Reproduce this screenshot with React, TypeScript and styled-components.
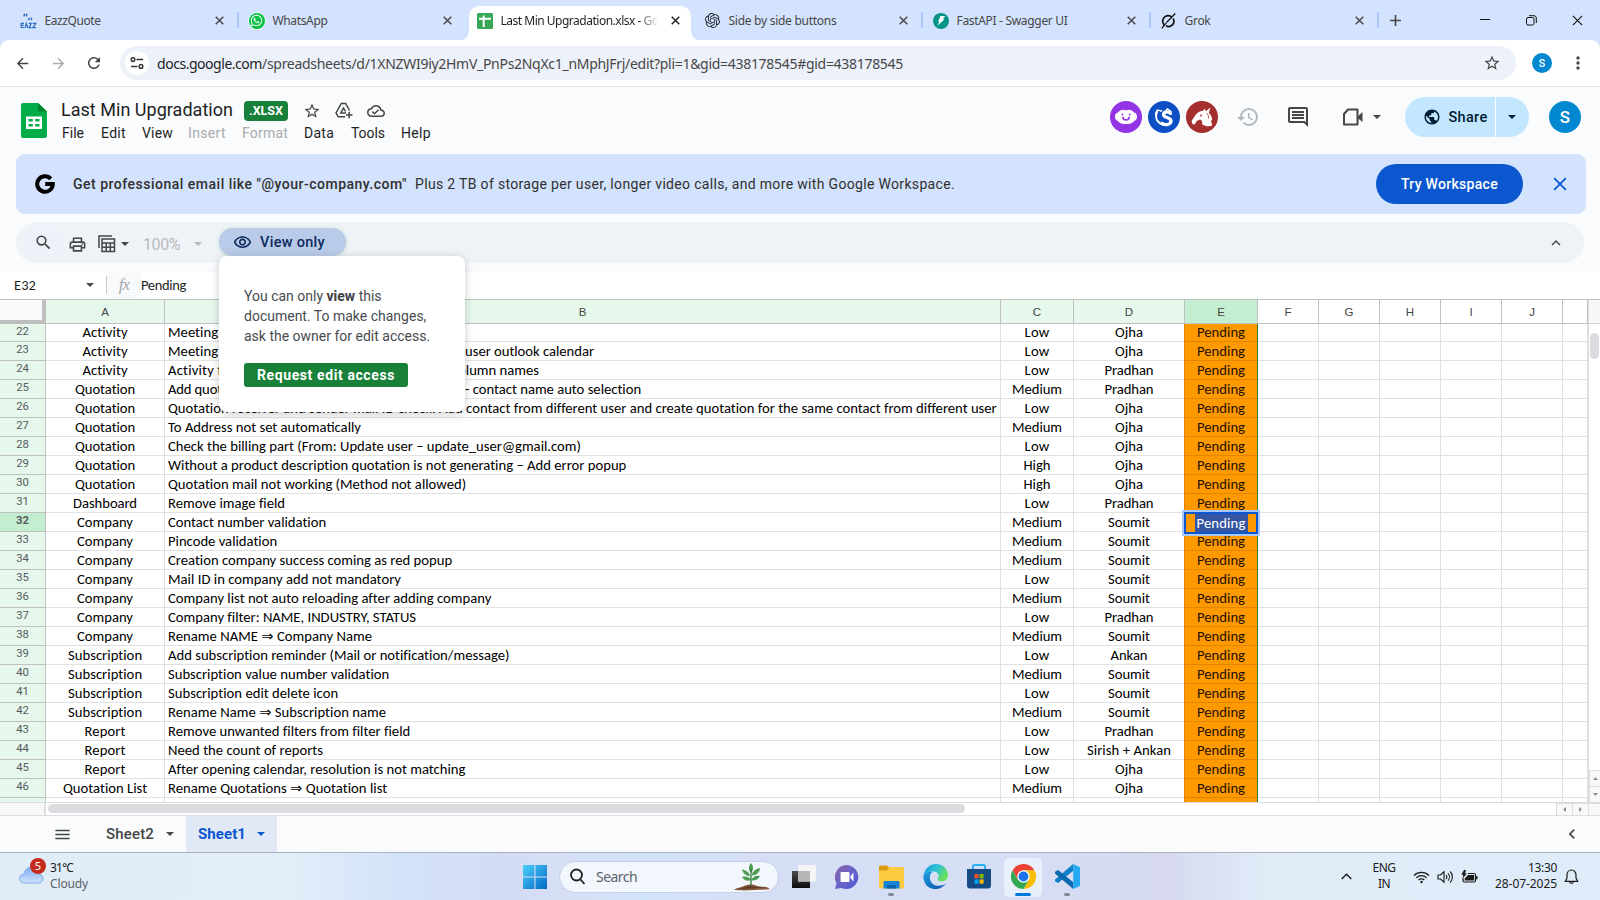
import React, { useLayoutEffect, useRef, useState } from "react";
import styled, { createGlobalStyle, css } from "styled-components";
import {
  MdArrowBack, MdArrowForward, MdRefresh, MdStarBorder, MdMoreVert, MdOutlineCloudDone,
  MdHistory, MdOutlineInsertComment, MdPublic, MdSearch, MdOutlinePrint, MdOutlineVisibility, MdExpandLess,
  MdChevronLeft, MdMenu,
} from "react-icons/md";
import { SiOpenai } from "react-icons/si";
import { FaWhatsapp } from "react-icons/fa";

const UI = `"Noto Sans", "Open Sans", sans-serif`;
const GOOGLE = `Roboto, "Liberation Sans", sans-serif`;
const CELL = `Carlito, Lato, "DejaVu Sans", sans-serif`;

const Global = createGlobalStyle`
  *, *::before, *::after { box-sizing: border-box; }
  body { margin: 0; overflow: hidden; background: #fff; }
  svg { display: block; flex: none; }
`;

/* Text run whose tracking is adjusted to fill a given width. */
const Run = styled.span<{ $w: number }>`
  display: inline-block;
  flex: none;
  width: ${(p) => p.$w}px;
  white-space: pre;
  text-align: left;
`;

function Fit({ w, children }: { w: number; children: string }) {
  const inner = useRef<HTMLSpanElement>(null);
  const [spacing, setSpacing] = useState(0);
  useLayoutEffect(() => {
    const el = inner.current;
    if (el) setSpacing((w - el.getBoundingClientRect().width) / Math.max(1, children.length));
  }, [w, children]);
  return (
    <Run $w={w}>
      <span ref={inner} style={{ letterSpacing: spacing }}>{children}</span>
    </Run>
  );
}

const Screen = styled.div`
  width: 1600px;
  height: 900px;
  overflow: hidden;
  display: flex;
  flex-direction: column;
  background: #f9fbfd;
  color: #1f1f1f;
  font-family: ${GOOGLE};
`;

/* Places one item in a fixed-width slot after a gap. */
const Slot = styled.div<{ $w: number; $ml?: number; $mt?: number; $c?: string }>`
  flex: none;
  display: flex;
  align-items: center;
  justify-content: center;
  width: ${(p) => p.$w}px;
  margin-left: ${(p) => p.$ml ?? 0}px;
  margin-top: ${(p) => p.$mt ?? 0}px;
  color: ${(p) => p.$c ?? "#444746"};
`;

const Caret = styled.i<{ $c?: string }>`
  width: 0;
  height: 0;
  border: 4px solid transparent;
  border-top-color: ${(p) => p.$c ?? "#444746"};
  border-bottom: 0;
`;

/* ---------- browser chrome ---------- */
const TabStrip = styled.div`
  flex: none;
  display: flex;
  height: 41px;
  padding-left: 10px;
  background: #d3e3fd;
  font: 12px ${UI};
`;
const Tab = styled.div<{ $active?: boolean; $sep?: boolean }>`
  position: relative;
  flex: none;
  display: flex;
  align-items: center;
  width: 228px;
  height: 41px;
  padding-left: 10px;
  color: ${(p) => (p.$active ? "#1f1f1f" : "#474747")};
  ${(p) => p.$sep && css`
    &::after { content: ""; position: absolute; right: -1px; top: 12px; width: 2px; height: 16px; background: #a8c7fa; }
  `}
  ${(p) => p.$active && css`
    &::before {
      content: ""; position: absolute; inset: 6px 3px 0 3px; background: #fff; border-radius: 10px 10px 0 0;
    }
  `}
  & > * { position: relative; }
`;
const Flare = styled.svg<{ $side: "left" | "right" }>`
  && { position: absolute; }
  bottom: 0;
  ${(p) => p.$side}: -7px;
`;
const TabIcon = styled.div`
  flex: none; width: 17px; height: 17px; margin-right: 7px; display: flex; align-items: center; justify-content: center;
`;
const TabTitle = styled.div<{ $fade?: boolean }>`
  flex: none; width: 159px; padding-left: 0.5px; white-space: nowrap;
  ${(p) => p.$fade && css`mask-image: linear-gradient(90deg, #000 138px, transparent 159px);`}
`;
const WindowButtons = styled.div`
  display: flex; align-items: center; height: 40px;
`;
const Backing = styled.div`flex: none; height: 46px; background: #d3e3fd;`;
const AddressRow = styled.div`
  display: flex;
  align-items: center;
  height: 46px;
  margin-top: -1px;
  background: #fff;
  border-radius: 9px 9px 0 0;
  box-shadow: 0 1px 0 #dfe3df;
`;
const Omnibox = styled.div`
  display: flex; align-items: center; width: 1396px; height: 34px; margin-left: 16px; padding-left: 5px;
  border-radius: 17px; background: #edf1fa; font: 14px ${UI}; color: #474747;
`;
const SiteInfo = styled.div`
  width: 24px; height: 24px; border-radius: 50%; background: #fff; display: grid; place-items: center; margin-right: 8px;
`;
const Host = styled.span`color: #1f1f1f;`;
const Avatar = styled.div<{ $s: number; $ml?: number; $bg?: string }>`
  flex: none; width: ${(p) => p.$s}px; height: ${(p) => p.$s}px; margin-left: ${(p) => p.$ml ?? 0}px;
  border-radius: 50%; background: ${(p) => p.$bg ?? "#0288d1"}; color: #fff; display: grid; place-items: center;
  font: 500 ${(p) => p.$s * 0.53}px ${GOOGLE};
`;

/* ---------- document header ---------- */
const DocHeader = styled.header`
  flex: none; display: flex; height: 67px; align-items: flex-start; padding: 0 20px;
`;
const DocTitles = styled.div`
  width: 400px; padding-top: 10px; margin-left: 14px;
`;
const TitleLine = styled.div`
  display: flex; align-items: center; height: 25px; font-size: 18px; line-height: 25px; color: #1f1f1f;
`;
const FileBadge = styled.span`
  display: flex; align-items: center; justify-content: center; width: 44px; height: 20px; margin: 2px 0 0 11px;
  border-radius: 4px; background: #188038; color: #fff; font: 700 12.5px ${GOOGLE};
`;
const MenuLine = styled.nav`
  display: flex; height: 21px; align-items: center; font-size: 14px; padding-left: 1px;
`;
const MenuItem = styled.span<{ $mr: number; $off?: boolean }>`
  margin-right: ${(p) => p.$mr}px; color: ${(p) => (p.$off ? "#a9abad" : "#1f1f1f")};
`;
const HeaderTools = styled.div`
  display: flex; align-items: center; height: 40px; margin: 10px 0 0 auto; width: 470px; flex: none;
`;
const ShareButton = styled.div`
  display: flex; flex: none; align-items: center; width: 124px; height: 40px; margin-left: 22px; border-radius: 20px;
  background: linear-gradient(90deg, #c2e7ff 90px, #fff 90px, #fff 91px, #c2e7ff 91px); color: #001d35;
  font-size: 14.5px; font-weight: 500;
`;
const Promo = styled.section`
  flex: none; display: flex; align-items: center; width: 1570px; height: 60px; margin-left: 16px;
  border-radius: 9px; background: #d3e3fd; font-size: 14px; color: #1f1f1f;
`;
const PromoText = styled.span<{ $bold?: boolean; $ml: number }>`
  margin-left: ${(p) => p.$ml}px; font-weight: ${(p) => (p.$bold ? 500 : 400)}; color: #303030;
`;
const PromoButton = styled.button`
  width: 147px; height: 40px; margin-left: auto; border: 0; padding: 0; border-radius: 20px; background: #0b57d0; color: #fff;
  font: 500 14px ${GOOGLE};
`;

/* ---------- toolbar and popup ---------- */
const Toolbar = styled.div`
  position: relative; flex: none; display: flex; align-items: center; width: 1568px; height: 41px; margin: 8px 0 0 16px;
  border-radius: 21px; background: #eff3f8;
`;
const SearchTile = styled.div`
  display: grid; place-items: center; width: 36px; height: 28px; margin-left: 9px; background: #edf1f9; color: #444746;
`;
const ViewOnly = styled.div`
  display: flex; align-items: center; width: 127px; height: 28px; margin: -1px 0 0 15px; padding-left: 14px;
  border-radius: 14px; background: #b9cbe8; color: #0c2a5c; font-size: 14.5px; font-weight: 500;
  box-shadow: 0 1px 4px #b9dccb;
`;
const AccessPopup = styled.div`
  position: absolute; z-index: 5; left: 203px; top: 34px; width: 246px; height: 156px; padding: 30px 25px 0; background: #fff;
  border-radius: 8px; box-shadow: 0 2px 8px rgba(60, 64, 67, 0.28); color: #474b50; font: 14px/20px ${GOOGLE};
`;
const PopupLine = styled.div`white-space: nowrap; height: 20px; b { color: #3c4043; }`;
const RequestButton = styled.button`
  display: block; width: 164px; height: 24px; margin-top: 17px; padding: 0; border: 0; border-radius: 3px; background: #188038;
  color: #fff; font: 700 14px ${GOOGLE};
`;

/* ---------- formula bar and grid ---------- */
const FormulaBar = styled.div`
  flex: none; display: flex; align-items: center; height: 28px; margin-top: 8px; background: #fff; color: #1f1f1f;
  font: 14.5px ${CELL}; border-top: 1px solid #f5f7fa; padding-bottom: 2px;
`;
const FxTile = styled.div`
  display: grid; place-items: center; width: 34px; height: 26px; background: #f8f9fa; color: #a4a7a9;
  font: italic 17px "Liberation Serif", serif; letter-spacing: -1px;
`;
const Divider = styled.i`width: 1px; height: 18px; margin-left: 10px; background: #c7c7c7;`;

const COLS = "46px 119px 836px 73px 111px 73px 61px 61px 61px 61px 61px 25px";
const GridArea = styled.div`
  flex: none; display: flex; height: 503px; background: #fff; border-top: 1px solid #c0c0c0;
`;
const Sheet = styled.div`width: 1588px; height: 502px; overflow: hidden; flex: none;`;
const HeadRow = styled.div`
  display: grid; grid-template-columns: ${COLS}; height: 24px;
`;
const Corner = styled.div`
  background: #f8f9fa; border-right: 4px solid #c0c0c0; border-bottom: 4px solid #bdbdbd;
`;
const Head = styled.div<{ $tone?: string }>`
  display: grid; place-items: center; background: ${(p) => p.$tone ?? "#fff"}; color: #444746;
  border-right: 1px solid #c0c0c0; border-bottom: 1px solid #c0c0c0; font: 11.5px/22px "Liberation Sans", sans-serif;
`;
const Row = styled.div<{ $first?: boolean }>`
  display: grid; grid-template-columns: ${COLS}; height: ${(p) => (p.$first ? 18 : 19)}px;
`;
const RowHead = styled.div<{ $on?: boolean }>`
  display: flex; justify-content: center; padding-top: 1px; background: ${(p) => (p.$on ? "#c4eed0" : "#e6f8ec")};
  border-right: 1px solid #c0c0c0; border-bottom: 1px solid #c0c0c0; color: #575b5f;
  font: ${(p) => (p.$on ? 700 : 400)} 11.3px/13px Roboto, sans-serif;
`;
const Cell = styled.div<{ $left?: boolean; $pending?: boolean }>`
  position: relative; display: flex; align-items: flex-end; justify-content: ${(p) => (p.$left ? "flex-start" : "center")};
  padding-left: ${(p) => (p.$left ? 3 : 0)}px; min-width: 0;
  background: ${(p) => (p.$pending ? "#ff9900" : "#fff")}; color: ${(p) => (p.$pending ? "#1c1000" : "#000")};
  border-right: 1px solid ${(p) => (p.$pending ? "#2c7a3d" : "#e1e1e1")};
  border-bottom: 1px solid ${(p) => (p.$pending ? "#e08600" : "#e1e1e1")};
  font: 14.67px/17px ${CELL}; white-space: pre;
  ${(p) => p.$pending && css`box-shadow: -1px 0 0 #e08600;`}
`;
const Gap = styled.i<{ $w: number }>`flex: none; width: ${(p) => p.$w}px;`;
const Selection = styled.div`
  position: absolute; z-index: 2; left: -1px; top: -1px; width: 74px; height: 22px; border: 2px solid #0b57d0; background: #ff9900;
  box-shadow: 0 0 0 2px #a8c7fa; display: flex; justify-content: center;
`;
const Selected = styled.span`
  display: flex; justify-content: center; width: 53px; height: 18px; background: #3455a1; color: #fff; line-height: 19px;
`;
const VScroll = styled.div`
  display: flex; flex-direction: column; width: 12px; height: 502px; background: #fff; border-left: 1px solid #dcdcdc;
`;
const VHead = styled.div`height: 24px; background: #f8f8f8; border-bottom: 1px solid #d5d5d5;`;
const VThumb = styled.div`width: 9px; height: 26px; margin: 9px 0 auto 1px; border-radius: 5px; background: #dadce0;`;
const ScrollButton = styled.div<{ $w: number; $h: number }>`
  display: grid; place-items: center; width: ${(p) => p.$w}px; height: ${(p) => p.$h}px; background: #f8f8f8;
  border-top: 1px solid #dcdcdc; border-left: 1px solid #dcdcdc; color: #8a8d90;
`;
const HScroll = styled.div`
  flex: none; display: flex; height: 13px; background: #fff; border-top: 1px solid #dadcdc;
`;
const HCorner = styled.div`width: 46px; background: #f8f8f8; border-right: 2px solid #e0e0e0;`;
const HThumb = styled.div`width: 917px; height: 9px; margin: 1px auto 0 2px; border-radius: 5px; background: #dadce0;`;

/* ---------- sheet tabs ---------- */
const SheetBar = styled.div`
  flex: none; display: flex; align-items: center; height: 38px; background: #f9fbfd; border-top: 1px solid #dcdfe2;
  border-bottom: 1px solid #a9b2c0; font-size: 15px; font-weight: 500; color: #444746;
`;
const ActiveSheet = styled.div`
  display: flex; align-items: center; width: 91px; height: 36px; margin-left: 10px; padding-left: 12px;
  background: #e1e9f7; color: #0b57d0; font-weight: 700;
`;

/* ---------- taskbar ---------- */
const Taskbar = styled.footer`
  flex: none; display: flex; align-items: center; height: 47px; font: 12px/16px ${UI}; color: #202020;
  background: linear-gradient(90deg, #e0edf6 0, #e1edf8 290px, #d3e3f9 400px, #d4dcf5 500px, #d6dff5 570px, #d2e4fa 640px,
    #d6def5 760px, #d6def5 1000px, #d7daef 1170px, #e1ecf8 1270px, #deebf8 1600px);
`;
const Weather = styled.div`display: flex; width: 523px; align-items: center;`;
const WeatherIcon = styled.div`position: relative; width: 33px; height: 30px; margin-left: 17px;`;
const CloudHolder = styled.div`position: absolute; left: 2px; top: 4px;`;
const Badge = styled.span`
  position: absolute; left: 13px; top: -4px; width: 16px; height: 16px; border-radius: 50%; background: #c42b1c; color: #fff;
  font: 11px/16px ${UI}; text-align: center;
`;
const WeatherText = styled.div<{ $soft?: boolean }>`
  position: relative; top: -1px; color: ${(p) => (p.$soft ? "#5b6068" : "#202020")};
`;
const SearchBox = styled.div`
  display: flex; align-items: center; width: 220px; height: 32px; margin-left: 12px; padding-left: 10px; border-radius: 16px;
  background: #f2f6fd; border: 1px solid #c5d0e6; color: #5f6368; font-size: 14px;
`;
const TaskApp = styled.div<{ $ml: number; $open?: boolean; $tile?: boolean }>`
  position: relative; flex: none; display: grid; place-items: center; width: 24px; height: 40px; margin-left: ${(p) => p.$ml}px;
  svg { position: relative; }
  ${(p) => p.$tile && css`
    &::before { content: ""; position: absolute; inset: 1px -7px 0; border-radius: 5px; background: #eaf0fb; }
  `}
  ${(p) => p.$open && css`
    &::after { content: ""; position: absolute; bottom: 1px; left: ${p.$tile ? 4 : 9}px; width: ${p.$tile ? 16 : 6}px; height: 3px;
      border-radius: 2px; background: ${p.$tile ? "#0078d4" : "#858b96"}; }
  `}
`;
const TrayText = styled.div<{ $w: number; $ml: number; $right?: boolean }>`
  flex: none; display: flex; flex-direction: column; align-items: ${(p) => (p.$right ? "flex-end" : "center")};
  width: ${(p) => p.$w}px; margin-left: ${(p) => p.$ml}px; margin-top: -1px;
`;

/* ---------- data ---------- */
const W: Record<string, number> = {
  Activity: 45, Quotation: 60, Dashboard: 64, Company: 56, Subscription: 74, Report: 41, "Quotation List": 84,
  Low: 25, Medium: 50, High: 27, Ojha: 28, Pradhan: 49, Soumit: 42, Ankan: 37, "Sirish + Ankan": 84, Pending: 48,
};
type Seg = string | number;
/* [number, module, description as text, width and gap sequence, priority, owner] */
const ROWS: [number, string, Seg[], string, string][] = [
  [22, "Activity", ["Meeting", 50], "Low", "Ojha"],
  [23, "Activity", ["Meeting", 50, 247, "user outlook calendar", 129], "Low", "Ojha"],
  [24, "Activity", ["Activity f", 54, 230, "column names", 87], "Low", "Pradhan"],
  [25, "Quotation", ["Add quot", 54, 243, "- contact name auto selection", 176], "Medium", "Pradhan"],
  [26, "Quotation", ["Quotation receiver and sender mail ID check. Add contact from different user and create quotation for the same contact from different user", 828], "Low", "Ojha"],
  [27, "Quotation", ["To Address not set automatically", 193], "Medium", "Ojha"],
  [28, "Quotation", ["Check the billing part (From: Update user – update_user@gmail.com)", 413], "Low", "Ojha"],
  [29, "Quotation", ["Without a product description quotation is not generating – Add error popup", 458], "High", "Ojha"],
  [30, "Quotation", ["Quotation mail not working (Method not allowed)", 298], "High", "Ojha"],
  [31, "Dashboard", ["Remove image field", 117], "Low", "Pradhan"],
  [32, "Company", ["Contact number validation", 158], "Medium", "Soumit"],
  [33, "Company", ["Pincode validation", 109], "Medium", "Soumit"],
  [34, "Company", ["Creation company success coming as red popup", 284], "Medium", "Soumit"],
  [35, "Company", ["Mail ID in company add not mandatory", 233], "Low", "Soumit"],
  [36, "Company", ["Company list not auto reloading after adding company", 323], "Medium", "Soumit"],
  [37, "Company", ["Company filter: NAME, INDUSTRY, STATUS", 248], "Low", "Pradhan"],
  [38, "Company", ["Rename NAME ⇒ Company Name", 204], "Medium", "Soumit"],
  [39, "Subscription", ["Add subscription reminder (Mail or notification/message)", 341], "Low", "Ankan"],
  [40, "Subscription", ["Subscription value number validation", 221], "Medium", "Soumit"],
  [41, "Subscription", ["Subscription edit delete icon", 170], "Low", "Soumit"],
  [42, "Subscription", ["Rename Name ⇒ Subscription name", 218], "Medium", "Soumit"],
  [43, "Report", ["Remove unwanted filters from filter field", 242], "Low", "Pradhan"],
  [44, "Report", ["Need the count of reports", 155], "Low", "Sirish + Ankan"],
  [45, "Report", ["After opening calendar, resolution is not matching", 297], "Low", "Ojha"],
  [46, "Quotation List", ["Rename Quotations ⇒ Quotation list", 219], "Medium", "Ojha"],
];

function Description({ segs }: { segs: Seg[] }) {
  const out: React.ReactNode[] = [];
  for (let i = 0; i < segs.length; i++) {
    const s = segs[i];
    if (typeof s === "string") {
      out.push(<Fit key={i} w={segs[i + 1] as number}>{s}</Fit>);
      i++;
    } else out.push(<Gap key={i} $w={s} />);
  }
  return <>{out}</>;
}

/* ---------- drawings ---------- */
const Cross = ({ s = 9, w = 1.6, c = "#474747" }) => (
  <svg width={s} height={s} viewBox="0 0 10 10" stroke={c} strokeWidth={w} fill="none"><path d="M.8.8l8.4 8.4M9.2.8L.8 9.2" /></svg>
);
const EazzLogo = () => (
  <svg width="17" height="16" viewBox="0 0 17 16" fill="none" stroke="#2f6cc4" strokeWidth="1.2">
    <path d="M5 1C4 1.500 4 2.500 4.500 3.200M7.300 1C6.300 1.500 6.300 2.500 6.800 3.200M8.500 5c.8.5.6 1.500 0 2M11 5c.8.5.6 1.500 0 2" strokeWidth="1.600" />
    <path d="M4 10.300H1.200v4.200H4M1.200 12.400H3.800M5 15l1.300-4.500L7.800 15M8.800 10.400h2.500l-2.200 4.200h2.500M12.600 10.400h3.200l-3 4.200h3.200" />
  </svg>
);
const WaDisc = styled.div`
  width: 16px; height: 16px; display: grid; place-items: center; border-radius: 50%; background: #09c143; color: #fff;
  box-shadow: 0 0 0 1px #e9f3f6;
`;
const WhatsAppIcon = () => (
  <WaDisc><FaWhatsapp size={13} /></WaDisc>
);
const SheetsFavicon = () => (
  <svg width="16" height="16" viewBox="0 0 16 16"><rect width="16" height="16" rx="1.500" fill="#34a853" /><path d="M2 5.800h12M6.700 2.500V14" stroke="#fff" strokeWidth="2" /></svg>
);
const FastApi = () => (
  <svg width="16" height="16" viewBox="0 0 16 16"><circle cx="8" cy="8" r="8" fill="#049486" /><path d="M7.500 3H12.200L9.900 6.200H11.500L4.300 13L6.300 8.700H5z" fill="#fff" /></svg>
);
const Grok = () => (
  <svg width="15" height="16" viewBox="0 0 15 16" fill="none" stroke="#111" strokeWidth="1.700"><path d="M3.600 12.300A5.200 5.200 0 0 1 10.800 4M12 5.500a5.200 5.200 0 0 1-7 7.300" /><path d="M.8 15.300L5.300 9.800M5.500 9.500L14.300.5" strokeWidth="1.300" /></svg>
);
const Tune = () => (
  <svg width="14" height="14" viewBox="0 0 14 14" fill="none" stroke="#333" strokeWidth="1.500"><circle cx="3" cy="3.600" r="1.800" /><circle cx="11" cy="10.400" r="1.800" /><path d="M6.500 3.600H13M1 10.400h6.500" /></svg>
);
const SheetsLogo = () => (
  <svg width="26" height="35" viewBox="0 0 26 35"><path d="M2 0h15l9 8.500V33a2 2 0 0 1-2 2H2a2 2 0 0 1-2-2V2a2 2 0 0 1 2-2z" fill="#00ac47" /><path d="M17 0l9 8.500h-9z" fill="#00832d" /><path d="M5 13.500h16v12.500H5zm2.500 2.400v2.600h4.300v-2.600zm6.700 0v2.600h4.300v-2.600zM7.500 21v2.600h4.300V21zm6.700 0v2.600h4.300V21z" fill="#fff" fillRule="evenodd" /></svg>
);
const DriveAdd = () => (
  <svg width="18" height="17" viewBox="0 0 18 17" fill="none" stroke="#444746" strokeWidth="1.500"><path d="M10 14.800H3.300L1 11 6.300 1.500h4.400L14.500 8.500" /><path d="M11 11H5.800L8.500 6l2 3.500" /><path d="M14.200 9.800v6.400M11 13h6.400" /></svg>
);
const Brain = () => (
  <svg width="24" height="16" viewBox="0 0 24 16"><path d="M4 3.500C6 .5 9.500 0 12 1.500 14.500 0 18 .5 20 3.500c4 1 4 7.500 0 8.500-1 2.500-5 3-8 3s-7-.5-8-3C0 11 0 4.500 4 3.500z" fill="#fff" /><path d="M8.800 7.800a3.200 3.200 0 0 0 6.400 0" stroke="#9334e6" strokeWidth="1.600" fill="none" /><circle cx="8.300" cy="5.500" r=".9" fill="#9334e6" /><circle cx="15.700" cy="5.500" r=".9" fill="#9334e6" /></svg>
);
const Dragon = () => (
  <svg width="32" height="32" viewBox="0 0 32 32" fill="none" stroke="#fff" strokeLinecap="round"><path d="M22.500 12.500C19 9.800 15.500 11 15.500 13.800c0 3.200 7.500 2.200 7.500 6 0 3.700-5 4.700-9 2.700" strokeWidth="3.300" /><path d="M9 11C6.500 17 9.500 22.500 15.500 23.800" strokeWidth="2" /><path d="M7.500 12.800L9.300 9l4.200 1M18 9.500l1.500-1.500 3.500 2.500" strokeWidth="1.500" /></svg>
);
const Unicorn = () => (
  <svg width="32" height="32" viewBox="0 0 32 32" fill="#fff"><path d="M5.800 19.500L10.500 12.800C12.500 10.800 15 10 17 9.800l1.800-2 1.200 2.400 4.500-4-1.700 5.700c2.300 2 3.500 4.600 3.200 7l-1 .8 1.300 4.900c-3.600 1.200-7.300.6-10.300-1.400.7-2.300 0-4-1.900-4.600l-3.400 1.500-2 3.300C7 24 5.300 22 5.800 19.500z" /><circle cx="15" cy="14.500" r=".9" fill="#a52e2e" /><path d="M20.500 12c1.500 1.500 2.300 3.300 2.200 5.500" fill="none" stroke="#a52e2e" strokeWidth=".8" /></svg>
);
const Meet = () => (
  <svg width="22" height="20" viewBox="0 0 22 20" fill="none" stroke="#444746" strokeWidth="2"><path d="M6 2.500h9.500v15H2V7z" strokeLinejoin="round" /><path d="M15.500 9.800L20.500 5v10l-5-4z" fill="#444746" stroke="none" /></svg>
);
const GLogo = () => (
  <svg width="20" height="20" viewBox="0 0 20 20" fill="none" stroke="#000" strokeWidth="4"><path d="M15.800 4.800A7.800 7.800 0 1 0 17.800 10H10.200" /></svg>
);
const FilterViews = () => (
  <svg width="18" height="18" viewBox="0 0 18 18" fill="none" stroke="#444746" strokeWidth="1.500"><path d="M1 13V1h13M4 4h12.500v12.500H4zM4 8h12.500M4 12.200h12.500M8.200 8v8.500M12.300 8v8.500" /></svg>
);
const Arrow = ({ d }: { d: string }) => <svg width="7" height="7" viewBox="0 0 7 7" fill="#8a8d90"><path d={d} /></svg>;
const Cloud = () => (
  <svg width="25" height="18" viewBox="0 0 25 18"><defs><linearGradient id="cl" x2="0" y2="1"><stop stopColor="#7fb0f3" /><stop offset="1" stopColor="#cfe0fb" /></linearGradient></defs><path d="M5 17a4.500 4.500 0 0 1 0-9C6 3 9 1 12.500 1s6.500 2.500 7 7a4.500 4.500 0 0 1 0 9z" fill="url(#cl)" stroke="#6f9fe8" strokeWidth=".8" /></svg>
);
const WindowsLogo = () => (
  <svg width="24" height="24" viewBox="0 0 24 24"><defs><linearGradient id="wn" x2="1" y2="1"><stop stopColor="#4fd0fa" /><stop offset="1" stopColor="#0067c8" /></linearGradient></defs><path d="M0 0h11.400v11.400H0zM12.500 0H24v11.400H12.500zM0 12.500h11.400V24H0zM12.500 12.500H24V24H12.500z" fill="url(#wn)" /></svg>
);
const Plant = () => (
  <svg width="36" height="28" viewBox="0 0 36 28"><path d="M0 27c3-3 7-2 10-4 4-2 10-2 13 0 4 1 9 0 13 3-9 1-24 2-36 1z" fill="#8a5a3c" /><path d="M3 26c6-2 8-1 12-3l8 1 10 1z" fill="#5d3926" /><g fill="#4f9d52"><path d="M17 0c3 3.500 2.500 7.500 0 9.500C14.500 7.500 14 3.500 17 0zM8 6.500c4 .5 7 2.500 8 6.500-4 0-7-2.500-8-6.500zM26 5c0 4-3 7-8 7.500 0-4 3.500-6.500 8-7.500zM8 14c3.500-1 7-.5 9 3-3.500 1.500-7 .5-9-3zM26 13c-1.500 3.500-5 5-9 4.500 1.500-3.500 5-5.500 9-4.500z" /></g><path d="M17 6v17" stroke="#2f7a3a" strokeWidth="1.300" /></svg>
);
const TaskView = () => (
  <svg width="25" height="25" viewBox="0 0 25 25"><defs><linearGradient id="tv" y2="1" x2="0"><stop stopColor="#4a4a4a" /><stop offset="1" stopColor="#0c0c0c" /></linearGradient></defs><path d="M1 7h18v17H1z" fill="url(#tv)" /><path d="M7 1h18v16.500H7z" fill="#f4f4f4" /><path d="M7 7h12v10.500H7z" fill="#b5b5b5" /></svg>
);
const Chat = () => (
  <svg width="24" height="24" viewBox="0 0 24 24"><defs><linearGradient id="ch" x2="1" y2="1"><stop stopColor="#8b68a8" /><stop offset=".5" stopColor="#6a62c8" /><stop offset="1" stopColor="#4a5bd2" /></linearGradient></defs><path d="M12 0a12 12 0 1 1-5.500 23L0 24l1.500-6A12 12 0 0 1 12 0z" fill="url(#ch)" /><rect x="5.500" y="7" width="9" height="10" rx="1" fill="#fff" /><path d="M15.500 11l3-3.500v9l-3-3.500z" fill="#fff" /></svg>
);
const Folder = () => (
  <svg width="25" height="24" viewBox="0 0 25 24"><path d="M0 2.500C0 1 .5.500 2 .500h6L11 3v5H0z" fill="#d99a10" /><path d="M10 2h13.500c1 0 1.500.5 1.500 1.500V22c0 1-.5 1.500-1.500 1.500h-22C.5 23.500 0 23 0 22V5.500h8z" fill="#fdcb3f" /><path d="M4.500 23.500v-6c0-1 .5-1.500 1.500-1.500h13c1 0 1.500.5 1.500 1.500v6z" fill="#1583d8" /><path d="M8 20h9v3.500H8z" fill="#0b62ad" /></svg>
);
const Edge = () => (
  <svg width="25" height="25" viewBox="0 0 24 24"><defs><linearGradient id="e1" x2="1" y2=".5"><stop stopColor="#1592dc" /><stop offset=".55" stopColor="#30c4d4" /><stop offset="1" stopColor="#6be15a" /></linearGradient><linearGradient id="e2" x2="1" y2="1"><stop stopColor="#1ba0e0" /><stop offset="1" stopColor="#0b4fa8" /></linearGradient></defs><path d="M.5 11C1.500 4.500 6.500 0 12.500 0 19.500 0 24 5 24 10.500c0 4-3 6.200-6 6.200-3.200 0-4.600-1.400-3.700-2.700 1.700-2.600.2-6.700-4-6.700C6 7.300 2 8.500.5 11z" fill="url(#e1)" /><path d="M.5 11c1.800-3.400 5.500-4.200 8.500-3.300C5.500 10 5.500 17 10.500 19.800c4 2 8.500 1 11.500-.8C16 26.500 5 25.500 1.500 17.500.4 15 .1 13 .5 11z" fill="url(#e2)" /></svg>
);
const Store = () => (
  <svg width="24" height="25" viewBox="0 0 24 25"><path d="M6 6V2.500C6 1.500 6.500 1 7.500 1h9c1 0 1.500.5 1.500 1.500V6" fill="none" stroke="#26b3f0" strokeWidth="2" /><path d="M0 5h24v16.500a3 3 0 0 1-3 3H3a3 3 0 0 1-3-3z" fill="#154a83" /><path d="M7.500 10H11.500v4.300h-4z" fill="#f25022" /><path d="M12.600 10h4v4.300h-4z" fill="#7fba00" /><path d="M7.500 15.400h4v4.300h-4z" fill="#00a4ef" /><path d="M12.600 15.400h4v4.300h-4z" fill="#ffb900" /></svg>
);
const Chrome = () => (
  <svg width="25" height="25" viewBox="0 0 48 48"><path d="M44.800 12A24 24 0 0 1 24 48l10.400-18L24 12z" fill="#fbbc04" /><path d="M24 48A24 24 0 0 1 3.200 12l10.400 18L34.400 30z" fill="#34a853" /><path d="M3.200 12A24 24 0 0 1 44.800 12H24L13.600 30z" fill="#ea4335" /><circle cx="24" cy="24" r="12" fill="#fff" /><circle cx="24" cy="24" r="9.500" fill="#1a73e8" /></svg>
);
const VsCode = () => (
  <svg width="25" height="25" viewBox="0 0 24 24"><path d="M17.500 0v6.500L3 18.200 0 16.500v-1.700z" fill="#0f7fc9" /><path d="M3 5.800L0 7.500v1.700L17.500 24v-6.500z" fill="#0a69b0" /><path d="M17.500 0L24 3v18l-6.500 3z" fill="#27a9f2" /></svg>
);
const Wifi = () => (
  <svg width="17" height="14" viewBox="0 0 17 14" fill="none" stroke="#1a1a1a" strokeWidth="1.200"><path d="M1 5.500a10.500 10.500 0 0 1 15 0M3.300 7.800a7.300 7.300 0 0 1 10.400 0M5.600 10a4.100 4.100 0 0 1 5.800 0" /><circle cx="8.500" cy="12" r="1.200" fill="#1a1a1a" stroke="none" /></svg>
);
const Sound = () => (
  <svg width="17" height="14" viewBox="0 0 17 14" fill="none" stroke="#1a1a1a" strokeWidth="1.100"><path d="M1 5h2.500L7 1.800v10.400L3.500 9H1zM9 5a3 3 0 0 1 0 4M11 3.300a5.500 5.500 0 0 1 0 7.400M13.200 1.500a8 8 0 0 1 0 11" /></svg>
);
const Battery = () => (
  <svg width="17" height="14" viewBox="0 0 17 14"><path d="M7 3.500h6a1.500 1.500 0 0 1 1.500 1.500v5.500A1.500 1.500 0 0 1 13 12H3.500A1.500 1.500 0 0 1 2 10.500V8" fill="none" stroke="#1a1a1a" strokeWidth="1.200" /><path d="M7 5h6v5.500H3.700V8.500zM15 6.200h1.500v3H15zM3 0L.3 4.800h2L1.500 8.500 6 3.600H4L5 0z" fill="#1a1a1a" /></svg>
);
const Bell = () => (
  <svg width="15" height="16" viewBox="0 0 15 16" fill="none" stroke="#1a1a1a" strokeWidth="1.200"><path d="M7.500 1C4.500 1 3 3.500 3 6v3L1.300 12.300h12.400L12 9V6c0-2.500-1.500-5-4.500-5zM5.500 12.500c.3 2.500 3.700 2.500 4 0" /></svg>
);

const TABS: { title: string; w: number; icon: () => React.ReactNode; active?: boolean; sep?: boolean }[] = [
  { title: "EazzQuote", w: 56, icon: () => <EazzLogo />, sep: true },
  { title: "WhatsApp", w: 55, icon: () => <WhatsAppIcon /> },
  { title: "Last Min Upgradation.xlsx - Go", w: 158, icon: () => <SheetsFavicon />, active: true },
  { title: "Side by side buttons", w: 108, icon: () => <SiOpenai size={15} color="#23282f" />, sep: true },
  { title: "FastAPI - Swagger UI", w: 111, icon: () => <FastApi />, sep: true },
  { title: "Grok", w: 26, icon: () => <Grok />, sep: true },
];

export default function App() {
  return (
    <Screen>
      <Global />
      <TabStrip>
        {TABS.map((t) => (
          <Tab key={t.title} $active={t.active} $sep={t.sep}>
            {t.active && (
              <>
                <Flare $side="left" width="10" height="10" viewBox="0 0 10 10"><path d="M10 0v10H0A10 10 0 0 0 10 0z" fill="#fff" /></Flare>
                <Flare $side="right" width="10" height="10" viewBox="0 0 10 10"><path d="M0 0v10h10A10 10 0 0 1 0 0z" fill="#fff" /></Flare>
              </>
            )}
            <TabIcon>{t.icon()}</TabIcon>
            <TabTitle $fade={t.active}><Fit w={t.w}>{t.title}</Fit></TabTitle>
            <Slot $w={20} $ml={6}><Cross c={t.active ? "#1f1f1f" : "#474747"} /></Slot>
          </Tab>
        ))}
        <WindowButtons>
          <Slot $w={14} $ml={10}><svg width="11" height="11" stroke="#474747" strokeWidth="1.600"><path d="M5.500 0v11M0 5.500h11" /></svg></Slot>
          <Slot $w={14} $ml={76}><svg width="10" height="2"><path d="M0 .5h10" stroke="#111" /></svg></Slot>
          <Slot $w={14} $ml={32}><svg width="11" height="11" fill="none" stroke="#111"><rect x=".5" y="2.500" width="7.500" height="7.500" rx="1.500" /><path d="M3 .7h5A2.300 2.300 0 0 1 10.300 3v5" /></svg></Slot>
          <Slot $w={14} $ml={32}><Cross s={11} w={1} c="#111" /></Slot>
        </WindowButtons>
      </TabStrip>
      <Backing>
        <AddressRow>
          <Slot $w={20} $ml={12}><MdArrowBack size={17} /></Slot>
          <Slot $w={20} $ml={16} $c="#a9abad"><MdArrowForward size={17} /></Slot>
          <Slot $w={20} $ml={16}><MdRefresh size={18} /></Slot>
          <Omnibox>
            <SiteInfo><Tune /></SiteInfo>
            <Host><Fit w={105}>docs.google.com</Fit></Host>
            <Fit w={641}>/spreadsheets/d/1XNZWI9iy2HmV_PnPs2NqXc1_nMphJFrj/edit?pli=1&gid=438178545#gid=438178545</Fit>
            <Slot $w={20} $ml={579}><MdStarBorder size={18} /></Slot>
          </Omnibox>
          <Avatar $s={20} $ml={16}>S</Avatar>
          <Slot $w={20} $ml={16}><MdMoreVert size={20} /></Slot>
        </AddressRow>
      </Backing>

      <DocHeader>
        <Slot $w={27} $mt={16}><SheetsLogo /></Slot>
        <DocTitles>
          <TitleLine>
            <Fit w={172}>Last Min Upgradation</Fit>
            <FileBadge>.XLSX</FileBadge>
            <Slot $w={20} $ml={14} $mt={2}><MdStarBorder size={18} /></Slot>
            <Slot $w={20} $ml={12} $mt={2}><DriveAdd /></Slot>
            <Slot $w={20} $ml={12} $mt={2}><MdOutlineCloudDone size={18} /></Slot>
          </TitleLine>
          <MenuLine>
            <MenuItem $mr={17}><Fit w={22}>File</Fit></MenuItem>
            <MenuItem $mr={16}><Fit w={25}>Edit</Fit></MenuItem>
            <MenuItem $mr={15}><Fit w={31}>View</Fit></MenuItem>
            <MenuItem $mr={16} $off><Fit w={38}>Insert</Fit></MenuItem>
            <MenuItem $mr={16} $off><Fit w={46}>Format</Fit></MenuItem>
            <MenuItem $mr={17}><Fit w={30}>Data</Fit></MenuItem>
            <MenuItem $mr={16}><Fit w={34}>Tools</Fit></MenuItem>
            <MenuItem $mr={0}><Fit w={30}>Help</Fit></MenuItem>
          </MenuLine>
        </DocTitles>
        <HeaderTools>
          <Avatar $s={32} $bg="#9334e6"><Brain /></Avatar>
          <Avatar $s={32} $ml={6} $bg="#0d4fc4"><Dragon /></Avatar>
          <Avatar $s={32} $ml={6} $bg="#a52e2e"><Unicorn /></Avatar>
          <Slot $w={24} $ml={18} $c="#b4b7ba"><MdHistory size={24} /></Slot>
          <Slot $w={24} $ml={26}><MdOutlineInsertComment size={24} /></Slot>
          <Slot $w={24} $ml={31}><Meet /></Slot>
          <Slot $w={12} $ml={6}><Caret /></Slot>
          <ShareButton>
            <Slot $w={20} $ml={17} $c="#001d35"><MdPublic size={18} /></Slot>
            <Slot $w={40} $ml={6} $c="#001d35"><Fit w={39}>Share</Fit></Slot>
            <Slot $w={12} $ml={18}><Caret $c="#001d35" /></Slot>
          </ShareButton>
          <Avatar $s={32} $ml={20}>S</Avatar>
        </HeaderTools>
      </DocHeader>

      <Promo>
        <Slot $w={20} $ml={19}><GLogo /></Slot>
        <PromoText $ml={18} $bold><Fit w={334}>Get professional email like "@your-company.com"</Fit></PromoText>
        <PromoText $ml={8}><Fit w={540}>Plus 2 TB of storage per user, longer video calls, and more with Google Workspace.</Fit></PromoText>
        <PromoButton><Fit w={97}>Try Workspace</Fit></PromoButton>
        <Slot $w={20} $ml={27}><Cross s={14} w={1.3} c="#0b57d0" /></Slot>
        <Gap $w={16} />
      </Promo>

      <Toolbar>
        <SearchTile><MdSearch size={19} /></SearchTile>
        <Slot $w={20} $ml={6} $mt={3}><MdOutlinePrint size={19} /></Slot>
        <Slot $w={20} $ml={10} $mt={3}><FilterViews /></Slot>
        <Slot $w={12} $ml={2} $mt={3}><Caret /></Slot>
        <Slot $w={37} $ml={12} $mt={3} $c="#b7babd"><Fit w={37}>100%</Fit></Slot>
        <Slot $w={12} $ml={12} $mt={3}><Caret $c="#b7babd" /></Slot>
        <ViewOnly>
          <MdOutlineVisibility size={19} /><Gap $w={8} /><Fit w={65}>View only</Fit>
        </ViewOnly>
        <Slot $w={20} $ml={1200}><MdExpandLess size={18} /></Slot>
        <AccessPopup>
          <PopupLine>You can only <b>view</b> this</PopupLine>
          <PopupLine>document. To make changes,</PopupLine>
          <PopupLine>ask the owner for edit access.</PopupLine>
          <RequestButton><Fit w={138}>Request edit access</Fit></RequestButton>
        </AccessPopup>
      </Toolbar>

      <FormulaBar>
        <Slot $w={22} $ml={14} $c="#1f1f1f"><Fit w={22}>E32</Fit></Slot>
        <Slot $w={12} $ml={48}><Caret /></Slot>
        <Divider />
        <FxTile>fx</FxTile>
        <Fit w={45}>Pending</Fit>
      </FormulaBar>

      <GridArea>
        <Sheet>
          <HeadRow>
            <Corner />
            <Head $tone="#e6f8ec">A</Head>
            <Head $tone="#e6f8ec">B</Head>
            <Head $tone="#e6f8ec">C</Head>
            <Head $tone="#e6f8ec">D</Head>
            <Head $tone="#c4eed0">E</Head>
            {["F", "G", "H", "I", "J", ""].map((c) => <Head key={c}>{c}</Head>)}
          </HeadRow>
          {ROWS.map(([n, mod, segs, prio, owner]) => (
            <Row key={n} $first={n === 22}>
              <RowHead $on={n === 32}>{n}</RowHead>
              <Cell><Fit w={W[mod]}>{mod}</Fit></Cell>
              <Cell $left><Description segs={segs} /></Cell>
              <Cell><Fit w={W[prio]}>{prio}</Fit></Cell>
              <Cell><Fit w={W[owner]}>{owner}</Fit></Cell>
              <Cell $pending>
                {n === 32 ? <Selection><Selected><Fit w={49}>Pending</Fit></Selected></Selection> : <Fit w={48}>Pending</Fit>}
              </Cell>
              <Cell /><Cell /><Cell /><Cell /><Cell /><Cell />
            </Row>
          ))}
          <Row>
            <RowHead /><Cell /><Cell /><Cell /><Cell /><Cell $pending /><Cell /><Cell /><Cell /><Cell /><Cell /><Cell />
          </Row>
        </Sheet>
        <VScroll>
          <VHead />
          <VThumb />
          <ScrollButton $w={11} $h={16}><Arrow d="M1 5h5L3.500 2z" /></ScrollButton>
          <ScrollButton $w={11} $h={16}><Arrow d="M1 2h5L3.500 5z" /></ScrollButton>
        </VScroll>
      </GridArea>
      <HScroll>
        <HCorner />
        <HThumb />
        <ScrollButton $w={16} $h={12}><Arrow d="M5 1v5L2 3.500z" /></ScrollButton>
        <ScrollButton $w={16} $h={12}><Arrow d="M2 1v5L5 3.500z" /></ScrollButton>
        <ScrollButton $w={12} $h={12} />
      </HScroll>

      <SheetBar>
        <Slot $w={20} $ml={52}><MdMenu size={19} /></Slot>
        <Gap $w={34} />
        <Fit w={48}>Sheet2</Fit>
        <Slot $w={12} $ml={10}><Caret /></Slot>
        <ActiveSheet>
          <Fit w={48}>Sheet1</Fit>
          <Slot $w={12} $ml={9}><Caret $c="#0b57d0" /></Slot>
        </ActiveSheet>
        <Slot $w={20} $ml={1285}><MdChevronLeft size={20} /></Slot>
      </SheetBar>

      <Taskbar>
        <Weather>
          <WeatherIcon><CloudHolder><Cloud /></CloudHolder><Badge>5</Badge></WeatherIcon>
          <div>
            <WeatherText><Fit w={23}>31°C</Fit></WeatherText>
            <WeatherText $soft><Fit w={38}>Cloudy</Fit></WeatherText>
          </div>
        </Weather>
        <WindowsLogo />
        <SearchBox>
          <svg width="15" height="17" viewBox="0 0 15 17" fill="none" stroke="#222" strokeWidth="1.800"><circle cx="6.500" cy="7" r="5.500" /><path d="M10.500 11.500l4 4.500" /></svg>
          <Gap $w={11} /><Fit w={41}>Search</Fit><Gap $w={97} /><Plant />
        </SearchBox>
        <TaskApp $ml={12}><TaskView /></TaskApp>
        <TaskApp $ml={20}><Chat /></TaskApp>
        <TaskApp $ml={20} $open><Folder /></TaskApp>
        <TaskApp $ml={20}><Edge /></TaskApp>
        <TaskApp $ml={20}><Store /></TaskApp>
        <TaskApp $ml={20} $open $tile><Chrome /></TaskApp>
        <TaskApp $ml={20} $open><VsCode /></TaskApp>
        <Slot $w={14} $ml={260}><svg width="11" height="7" fill="none" stroke="#1a1a1a" strokeWidth="1.400"><path d="M.7 6L5.500 1.200 10.300 6" /></svg></Slot>
        <TrayText $w={30} $ml={16}><Fit w={23}>ENG</Fit><Fit w={12}>IN</Fit></TrayText>
        <Slot $w={18} $ml={13}><Wifi /></Slot>
        <Slot $w={18} $ml={6}><Sound /></Slot>
        <Slot $w={18} $ml={6}><Battery /></Slot>
        <TrayText $w={70} $ml={9} $right><Fit w={29}>13:30</Fit><Fit w={62}>28-07-2025</Fit></TrayText>
        <Slot $w={16} $ml={6}><Bell /></Slot>
      </Taskbar>
    </Screen>
  );
}
